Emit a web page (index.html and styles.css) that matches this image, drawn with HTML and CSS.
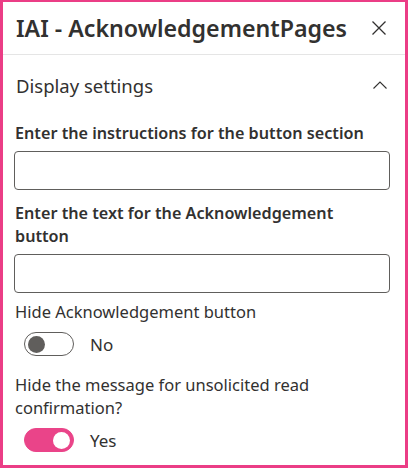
FILE: index.html
```html
<!DOCTYPE html>
<html lang="en">
  <head>
    <meta charset="UTF-8" />
    <title>IAI - AcknowledgementPages</title>
    <link rel="stylesheet" href="styles.css">
  </head>
  <body>
    <div class="panel">
      <div class="panel-header">
        <h1 class="panel-title">IAI - AcknowledgementPages</h1>
        <svg class="close-icon" width="14" height="14" viewBox="0 0 14 14">
          <path d="M0.5 0.5 L13.5 13.5 M13.5 0.5 L0.5 13.5" stroke="#323130" stroke-width="1.3" fill="none" />
        </svg>
      </div>

      <div class="group-header">
        <span>Display settings</span>
        <svg class="chevron" width="14" height="8" viewBox="0 0 14 8">
          <path d="M0.5 7.5 L7 1 L13.5 7.5" stroke="#323130" stroke-width="1.1" fill="none" />
        </svg>
      </div>

      <div class="fields">
        <div class="field">
          <label class="field-label">Enter the instructions for the button section</label>
          <input class="text-input" type="text" />
        </div>

        <div class="field">
          <label class="field-label">Enter the text for the Acknowledgement button</label>
          <input class="text-input" type="text" />
        </div>

        <div class="toggle-field">
          <div class="toggle-label">Hide Acknowledgement button</div>
          <div class="toggle-row">
            <span class="toggle"><span class="knob"></span></span>
            <span class="toggle-state">No</span>
          </div>
        </div>

        <div class="toggle-field">
          <div class="toggle-label">Hide the message for unsolicited read confirmation?</div>
          <div class="toggle-row">
            <span class="toggle on"><span class="knob"></span></span>
            <span class="toggle-state">Yes</span>
          </div>
        </div>
      </div>
    </div>
  </body>
</html>
```

FILE: styles.css
```css
body {
  margin: 0;
  font-family: "Noto Sans", "Open Sans", sans-serif;
  color: #323130;
  background: white;
}
.panel {
  width: 408px;
  height: 468px;
  box-sizing: border-box;
  border: 3px solid #eb3d86;
  border-top-width: 2px;
  overflow: hidden;
}
.panel-header {
  display: flex;
  align-items: center;
  justify-content: space-between;
  height: 52px;
  padding: 0 19px 0 13px;
  border-bottom: 1px solid #e5e5e5;
}
.panel-title {
  margin: 0;
  font-size: 23.2px;
  font-weight: 600;
}
.close-icon {
  display: block;
}
.group-header {
  display: flex;
  align-items: center;
  justify-content: space-between;
  height: 60px;
  padding: 0 18px 0 13px;
  font-size: 18.5px;
}
.chevron {
  display: block;
}
.fields {
  padding: 0 15px 0 11px;
}
.field {
  margin-bottom: 5px;
}
.field-label {
  display: block;
  font-size: 16.2px;
  font-weight: 600;
  line-height: 23px;
  padding: 7px 10px 6px 1px;
}
.text-input {
  display: block;
  width: 100%;
  height: 39px;
  box-sizing: border-box;
  border: 1px solid #605e5c;
  border-radius: 4px;
}
.toggle-label {
  font-size: 16.5px;
  line-height: 23px;
  padding: 2px 0 0 1px;
}
.toggle-row {
  display: flex;
  align-items: center;
  gap: 16px;
  height: 36px;
  margin: 3px 0 9px;
  padding-left: 10px;
}
.toggle {
  display: flex;
  align-items: center;
  width: 50px;
  height: 24px;
  box-sizing: border-box;
  border: 1px solid #605e5c;
  border-radius: 12px;
  padding: 0 3px;
}
.knob {
  width: 17px;
  height: 17px;
  border-radius: 50%;
  background: #605e5c;
}
.toggle.on {
  background: #ea4489;
  border-color: #ea4489;
  justify-content: flex-end;
}
.toggle.on .knob {
  background: white;
}
.toggle-state {
  font-size: 17px;
}
```
